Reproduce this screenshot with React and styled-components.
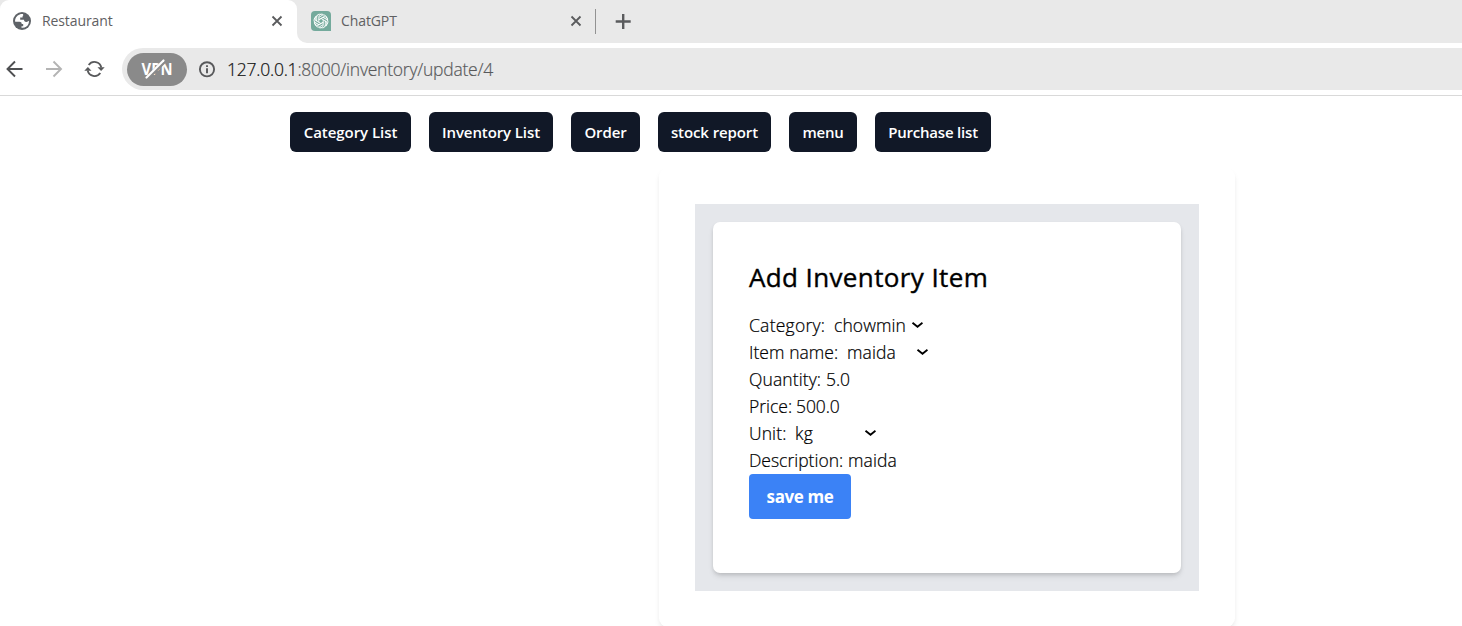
import React from "react";
import styled, { createGlobalStyle } from "styled-components";

const GlobalStyle = createGlobalStyle`
  * { box-sizing: border-box; }
  body {
    margin: 0;
    overflow: hidden;
    background: #fff;
    color: #000;
    font-family: "Segoe UI", "Open Sans", "Noto Sans", sans-serif;
  }
  button { font-family: inherit; border: 0; padding: 0; }
`;

const Window = styled.div`
  height: 626px;
  overflow: hidden;
`;

const TabStrip = styled.div`
  display: flex;
  height: 43px;
  background: linear-gradient(to right, #fff 0 310px, #e9e9e9 310px);
`;

const TabCorner = styled.div`
  width: 297px;
  background: #e9e9e9;
`;

const Tab = styled.div`
  display: flex;
  align-items: center;
  height: 43px;
  padding: 0 12px 1px;
  color: #5f6062;
  font-size: 14px;
`;

const ActiveTab = styled(Tab)`
  width: 297px;
  background: #fff;
  border-radius: 9px 9px 0 0;
`;

const InactiveTabs = styled.div`
  display: flex;
  align-items: center;
  flex: 1;
  background: #e9e9e9;
  border-bottom-left-radius: 10px;
`;

const InactiveTab = styled(Tab)`
  width: 298px;
  padding-left: 14px;
  padding-right: 11px;
`;

const TabTitle = styled.span`
  flex: 1;
  margin-left: ${(p) => p.$gap}px;
  padding-bottom: 2px;
  letter-spacing: ${(p) => p.$track}px;
  white-space: nowrap;
`;

const TabDivider = styled.div`
  width: 1px;
  height: 25px;
  margin-right: 19px;
  background: #929292;
`;

const Toolbar = styled.div`
  display: flex;
  align-items: center;
  height: 53px;
  padding: 5px 0 5px 4px;
  border-bottom: 1px solid #d9d9d9;
`;

const NavIcons = styled.div`
  display: flex;
  gap: 20px;
  width: 118px;
`;

const AddressBar = styled.div`
  display: flex;
  align-items: center;
  flex: 1;
  height: 42px;
  padding-left: 5px;
  background: #e9e9e9;
  border-radius: 21px 0 0 21px;
`;

const VpnBadge = styled.div`
  display: grid;
  place-items: center;
  width: 60px;
  height: 33px;
  margin-right: 11px;
  border-radius: 17px;
  background: #8a8a8a;
`;

const Url = styled.span`
  margin-left: 11px;
  color: #58595b;
  font-size: 17.5px;
  font-weight: 300;
  -webkit-text-stroke: 0.2px currentColor;
  letter-spacing: ${(p) => p.$track}px;
  white-space: nowrap;
`;

const Host = styled.span`
  color: #111;
`;

const NavBar = styled.nav`
  display: flex;
  gap: 18px;
  padding: 16px 0 0 290px;
`;

const NavButton = styled.button`
  width: ${(p) => p.$width}px;
  height: 40px;
  padding-bottom: 1px;
  border-radius: 6px;
  background: #111827;
  color: #fff;
  font-size: 15px;
  font-weight: 600;
  letter-spacing: ${(p) => p.$track}px;
  white-space: nowrap;
`;

const OuterCard = styled.main`
  width: 576px;
  height: 459px;
  margin: 16px 0 0 659px;
  padding: 36px;
  border-radius: 9px;
  box-shadow: 0 4px 6px -1px rgba(0, 0, 0, 0.08), 0 2px 4px -1px rgba(0, 0, 0, 0.04);
`;

const GrayPanel = styled.div`
  height: 387px;
  padding: 18px;
  background: #e5e7eb;
`;

const FormCard = styled.form`
  height: 351px;
  padding: 36px;
  border-radius: 7px;
  background: #fff;
  box-shadow: 0 4px 6px -1px rgba(0, 0, 0, 0.1), 0 2px 4px -2px rgba(0, 0, 0, 0.1), 0 2px 4px rgba(0, 0, 0, 0.06);
`;

const Title = styled.h1`
  margin: 0 0 18px;
  height: 36px;
  line-height: 38px;
  font-size: 26px;
  font-weight: 500;
  -webkit-text-stroke: 0.4px #000;
  letter-spacing: ${(p) => p.$track}px;
`;

const Field = styled.div`
  display: flex;
  align-items: center;
  height: 27px;
  padding-bottom: 2px;
  font-size: 17.5px;
  font-weight: 300;
  -webkit-text-stroke: 0.22px #000;
  white-space: nowrap;
`;

const Label = styled.span`
  width: ${(p) => p.$width}px;
  letter-spacing: ${(p) => p.$track}px;
`;

const Value = styled.span`
  letter-spacing: ${(p) => p.$track}px;
`;

const Choice = styled.span`
  display: flex;
  align-items: center;
  justify-content: space-between;
  width: ${(p) => p.$width}px;
`;

const SaveButton = styled.button`
  display: block;
  width: 102px;
  height: 45px;
  border-radius: 4px;
  background: #3b82f6;
  color: #fff;
  font-size: 17px;
  font-weight: 700;
  letter-spacing: ${(p) => p.$track}px;
`;

const GlobeIcon = () => (
  <svg width="20" height="20" viewBox="0 0 20 20">
    <circle cx="10" cy="10" r="9" fill="#5f6368" />
    <path d="M11 3C7.500 2.500 4 5 3.200 8.500c-.2 1-.2 1.600 0 2.200h4.200c1.500 0 2.300.8 2.300 2.200h1.500v2.300H9.500v1.600c3.500.4 6.400-1.600 7.200-4.600.3-1 .3-1.700.2-2.400-.8.8-1.700 1.200-2.700 1.100-1.500-.1-2.200-.9-2.200-2.200H8.200V6.400h2.300c0-1 .2-1.600.8-2.100z" fill="#fff" />
  </svg>
);

const petals = [0, 60, 120, 180, 240, 300];
const ChatLogo = () => (
  <svg width="20" height="20" viewBox="0 0 20 20">
    <path d="M4 0h12a4 4 0 0 1 4 4v16H4a4 4 0 0 1-4-4V4a4 4 0 0 1 4-4z" fill="#74aa9c" />
    <g fill="none" stroke="#fff" strokeWidth="0.9">
      {petals.map((a) => (
        <path key={a} transform={`rotate(${a} 10 10)`} d="M7.800 11.300V6.400L11.300 4.300A2.900 2.900 0 0 1 15.600 7.300M7.800 6.400V5.800A2.900 2.900 0 0 1 12.200 3.500" />
      ))}
    </g>
  </svg>
);

const CloseIcon = () => (
  <svg width="12" height="12" viewBox="0 0 12 12" stroke="#5a5b5d" strokeWidth="1.8" style={{ marginRight: 2 }}>
    <path d="M1.500 1.500l9 9M10.500 1.500l-9 9" />
  </svg>
);

const PlusIcon = () => (
  <svg width="16" height="16" viewBox="0 0 16 16" stroke="#5a5b5d" strokeWidth="2.400">
    <path d="M8.200 0v15M.700 7.500h15" />
  </svg>
);

const ArrowIcon = ({ color, flip }) => (
  <svg width="20" height="20" viewBox="0 0 20 20" fill="none" stroke={color} strokeWidth="1.900">
    <path d="M18 10H3.500M10.500 2.500L3 10l7.500 7.500" transform={flip ? "rotate(180 10 10)" : "translate(.5 0)"} />
  </svg>
);

const ReloadIcon = () => (
  <svg width="21" height="20" viewBox="-.5 0 21 20" fill="none">
    <path d="M4.200 6A7 7 0 0 1 16.800 8.500M15.800 14A7 7 0 0 1 3.200 11.500" stroke="#58595b" strokeWidth="1.800" />
    <path d="M13 8.200h7.200L16.600 12zM-.200 11.800H7L3.400 8z" fill="#58595b" />
  </svg>
);

const VpnGraphic = () => (
  <svg width="34" height="24" viewBox="0 0 34 24">
    <text x="1.500" y="18" fill="#fff" fontFamily="Open Sans, sans-serif" fontSize="16" fontWeight="700" textLength="31" lengthAdjust="spacingAndGlyphs">VPN</text>
    <path d="M9 19.500L24.500 4" stroke="#8a8a8a" strokeWidth="4.500" />
    <path d="M6.500 20.500L23.500 3.500" stroke="#fff" strokeWidth="2.200" strokeLinecap="round" />
  </svg>
);

const InfoIcon = () => (
  <svg width="18" height="18" viewBox="0 0 18 18" fill="none" stroke="#58595b" strokeWidth="1.900">
    <circle cx="9" cy="9.300" r="7.100" />
    <path d="M9 8.300v5M9 5.200v1.800" />
  </svg>
);

const ChevronIcon = () => (
  <svg width="12" height="8" viewBox="0 0 12 8" fill="none" stroke="#000" strokeWidth="1.900">
    <path d="M1.500 1.800l5 4 5-4" />
  </svg>
);

const links = [
  { text: "Category List", width: 121, track: -0.05 },
  { text: "Inventory List", width: 124, track: -0.1 },
  { text: "Order", width: 69, track: -0.1 },
  { text: "stock report", width: 113, track: -0.1 },
  { text: "menu", width: 68, track: -0.2 },
  { text: "Purchase list", width: 116, track: -0.2 },
];

const fields = [
  { label: "Category:", labelWidth: 85, value: "chowmin", choice: 89, track: 0.25, valueTrack: 0.1 },
  { label: "Item name:", labelWidth: 98, value: "maida", choice: 81, track: 0.05, valueTrack: 0.1 },
  { label: "Quantity:", labelWidth: 77, value: "5.0", track: 0.1, valueTrack: -0.1 },
  { label: "Price:", labelWidth: 47, value: "500.0", track: 0, valueTrack: -0.1 },
  { label: "Unit:", labelWidth: 46, value: "kg", choice: 81, track: 0.1, valueTrack: 0.3 },
  { label: "Description:", labelWidth: 99, value: "maida", track: 0, valueTrack: 0.1 },
];

export default function App() {
  return (
    <Window>
      <GlobalStyle />
      <TabStrip>
        <TabCorner>
          <ActiveTab>
            <GlobeIcon />
            <TabTitle $gap={10} $track={-0.1}>Restaurant</TabTitle>
            <CloseIcon />
          </ActiveTab>
        </TabCorner>
        <InactiveTabs>
          <InactiveTab>
            <ChatLogo />
            <TabTitle $gap={10} $track={-0.1}>ChatGPT</TabTitle>
            <CloseIcon />
          </InactiveTab>
          <TabDivider />
          <PlusIcon />
        </InactiveTabs>
      </TabStrip>
      <Toolbar>
        <NavIcons>
          <ArrowIcon color="#4f5052" />
          <ArrowIcon color="#b4b4b4" flip />
          <ReloadIcon />
        </NavIcons>
        <AddressBar>
          <VpnBadge><VpnGraphic /></VpnBadge>
          <InfoIcon />
          <Url $track={-0.23}><Host>127.0.0.1</Host>:8000/inventory/update/4</Url>
        </AddressBar>
      </Toolbar>
      <NavBar>
        {links.map((l) => (
          <NavButton key={l.text} $width={l.width} $track={l.track}>{l.text}</NavButton>
        ))}
      </NavBar>
      <OuterCard>
        <GrayPanel>
          <FormCard>
            <Title $track={0.38}>Add Inventory Item</Title>
            {fields.map((f) => (
              <Field key={f.label}>
                <Label $width={f.labelWidth} $track={f.track}>{f.label}</Label>
                {f.choice ? (
                  <Choice $width={f.choice}>
                    <Value $track={f.valueTrack}>{f.value}</Value>
                    <ChevronIcon />
                  </Choice>
                ) : (
                  <Value $track={f.valueTrack}>{f.value}</Value>
                )}
              </Field>
            ))}
            <SaveButton type="button" $track={-0.4}>save me</SaveButton>
          </FormCard>
        </GrayPanel>
      </OuterCard>
    </Window>
  );
}
